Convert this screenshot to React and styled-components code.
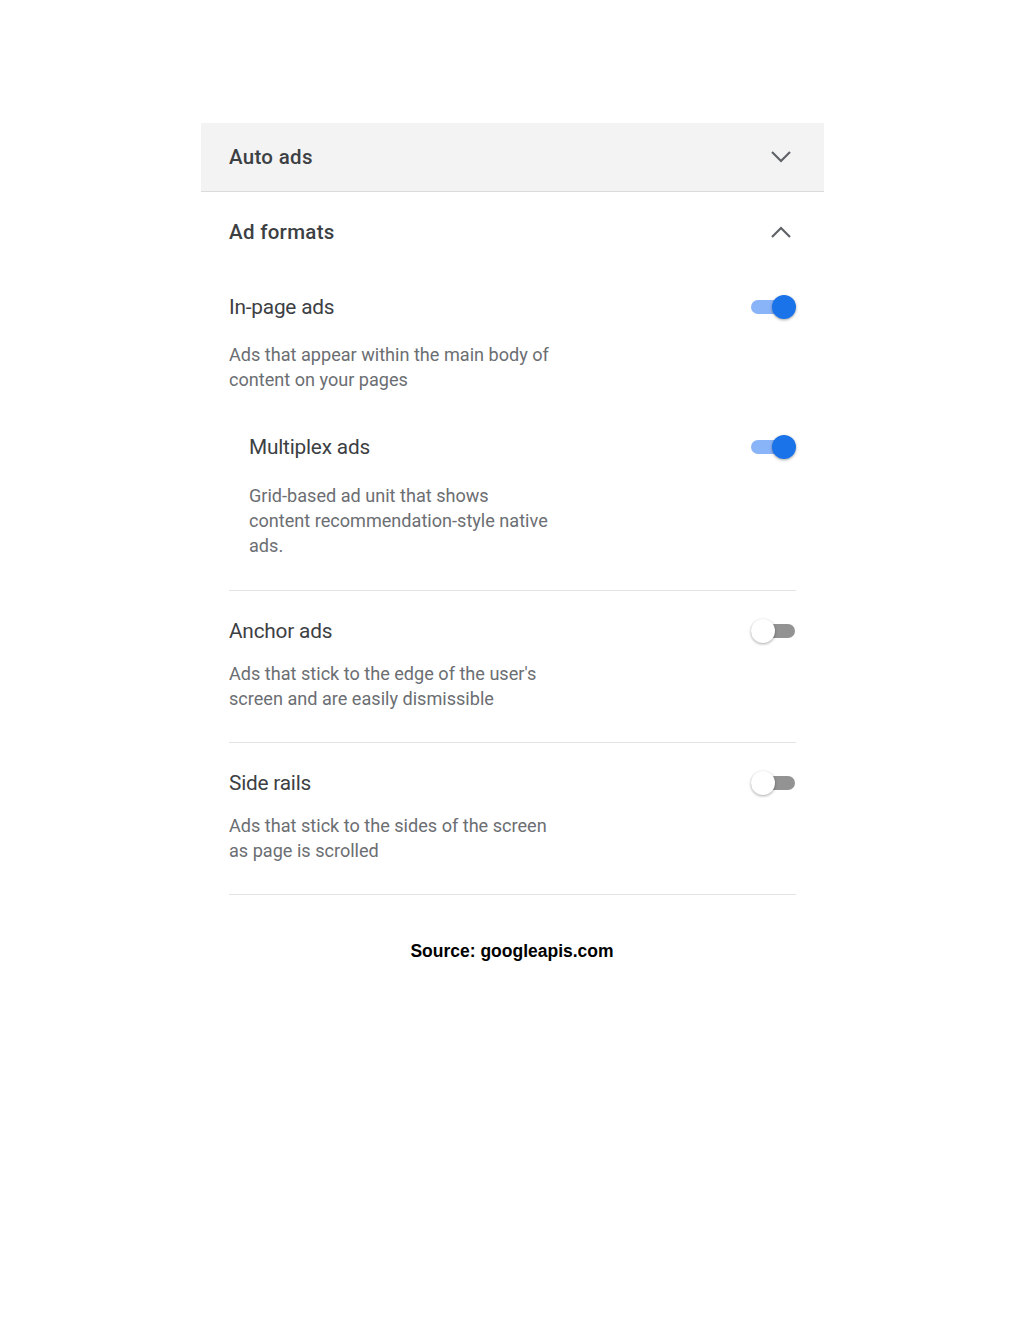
import React from "react";
import styled, { createGlobalStyle } from "styled-components";

const Global = createGlobalStyle`
  html, body { margin: 0; padding: 0; background: #fff; }
  body { font-family: Roboto, "Liberation Sans", sans-serif; }
`;

const Page = styled.div`
  width: 1024px;
  min-height: 1325px;
  padding-top: 123px;
  box-sizing: border-box;
  display: flex;
  flex-direction: column;
  align-items: center;
`;

const Card = styled.div`
  width: 623px;
  margin-left: 1px;
`;

const Header = styled.div`
  height: 69px;
  box-sizing: border-box;
  background: #f3f3f3;
  border-bottom: 1px solid #dadada;
  display: flex;
  align-items: center;
  justify-content: space-between;
  padding: 0 28px;
`;

const HeaderTitle = styled.div`
  font-family: Roboto, sans-serif;
  font-weight: 500;
  font-size: 20.5px;
  color: #3c4043;
  letter-spacing: 0.3px;
`;

const SectionHead = styled.div`
  height: 80px;
  display: flex;
  align-items: center;
  justify-content: space-between;
  padding: 0 28px;
`;

const Body = styled.div`
  padding: 0 28px;
`;

const Item = styled.div`
  padding: ${(p) => p.$pad};
  padding-left: ${(p) => (p.$indent ? "20px" : "0")};
  border-bottom: ${(p) => (p.$divider ? "1px solid #e3e3e3" : "none")};
`;

const Row = styled.div`
  display: flex;
  align-items: center;
  justify-content: space-between;
  height: 34px;
`;

const Title = styled.div`
  font-size: 20.8px;
  color: #3c4043;
  letter-spacing: -0.2px;
`;

const Desc = styled.div`
  margin-top: ${(p) => p.$mt};
  max-width: ${(p) => (p.$narrow ? "305px" : "326px")};
  font-size: 18.1px;
  line-height: 25px;
  color: #6b6e72;
`;

const Track = styled.div`
  position: relative;
  width: 44px;
  height: 14px;
  border-radius: 7px;
  margin-right: 1px;
  background: ${(p) => (p.$on ? "#8ab4f8" : "#939393")};
`;

const Thumb = styled.div`
  position: absolute;
  top: 50%;
  width: 24px;
  height: 24px;
  border-radius: 50%;
  transform: translateY(-50%);
  left: ${(p) => (p.$on ? "21px" : "0px")};
  background: ${(p) => (p.$on ? "#1a73e8" : "#fff")};
  box-shadow: 0 1px 3px rgba(0, 0, 0, 0.35);
`;

const Source = styled.div`
  margin-top: 46px;
  font-family: "Liberation Sans", Arial, sans-serif;
  font-weight: 700;
  font-size: 17.5px;
  line-height: 20px;
  color: #000;
`;

const Chevron = ({ up }) => (
  <svg width="22" height="14" viewBox="0 0 22 14" style={{ marginRight: 4 }}>
    <path
      d={up ? "M2 12 L11 3 L20 12" : "M2 2 L11 11 L20 2"}
      fill="none"
      stroke="#5f6368"
      strokeWidth="2.2"
    />
  </svg>
);

const Toggle = ({ on }) => (
  <Track $on={on}>
    <Thumb $on={on} />
  </Track>
);

export default function App() {
  return (
    <>
      <Global />
      <Page>
        <Card>
          <Header>
            <HeaderTitle>Auto ads</HeaderTitle>
            <Chevron />
          </Header>
          <SectionHead>
            <HeaderTitle>Ad formats</HeaderTitle>
            <Chevron up />
          </SectionHead>
          <Body>
            <Item $pad="18px 0 0">
              <Row>
                <Title>In-page ads</Title>
                <Toggle on />
              </Row>
              <Desc $mt="18px">Ads that appear within the main body of content on your pages</Desc>
            </Item>
            <Item $indent $divider $pad="38px 0 32px">
              <Row>
                <Title>Multiplex ads</Title>
                <Toggle on />
              </Row>
              <Desc $narrow $mt="19px">Grid-based ad unit that shows content recommendation-style native ads.</Desc>
            </Item>
            <Item $divider $pad="23px 0 31px">
              <Row>
                <Title>Anchor ads</Title>
                <Toggle />
              </Row>
              <Desc $mt="13px">Ads that stick to the edge of the user's screen and are easily dismissible</Desc>
            </Item>
            <Item $divider $pad="23px 0 31px">
              <Row>
                <Title>Side rails</Title>
                <Toggle />
              </Row>
              <Desc $mt="13px">Ads that stick to the sides of the screen as page is scrolled</Desc>
            </Item>
          </Body>
        </Card>
        <Source>Source: googleapis.com</Source>
      </Page>
    </>
  );
}
